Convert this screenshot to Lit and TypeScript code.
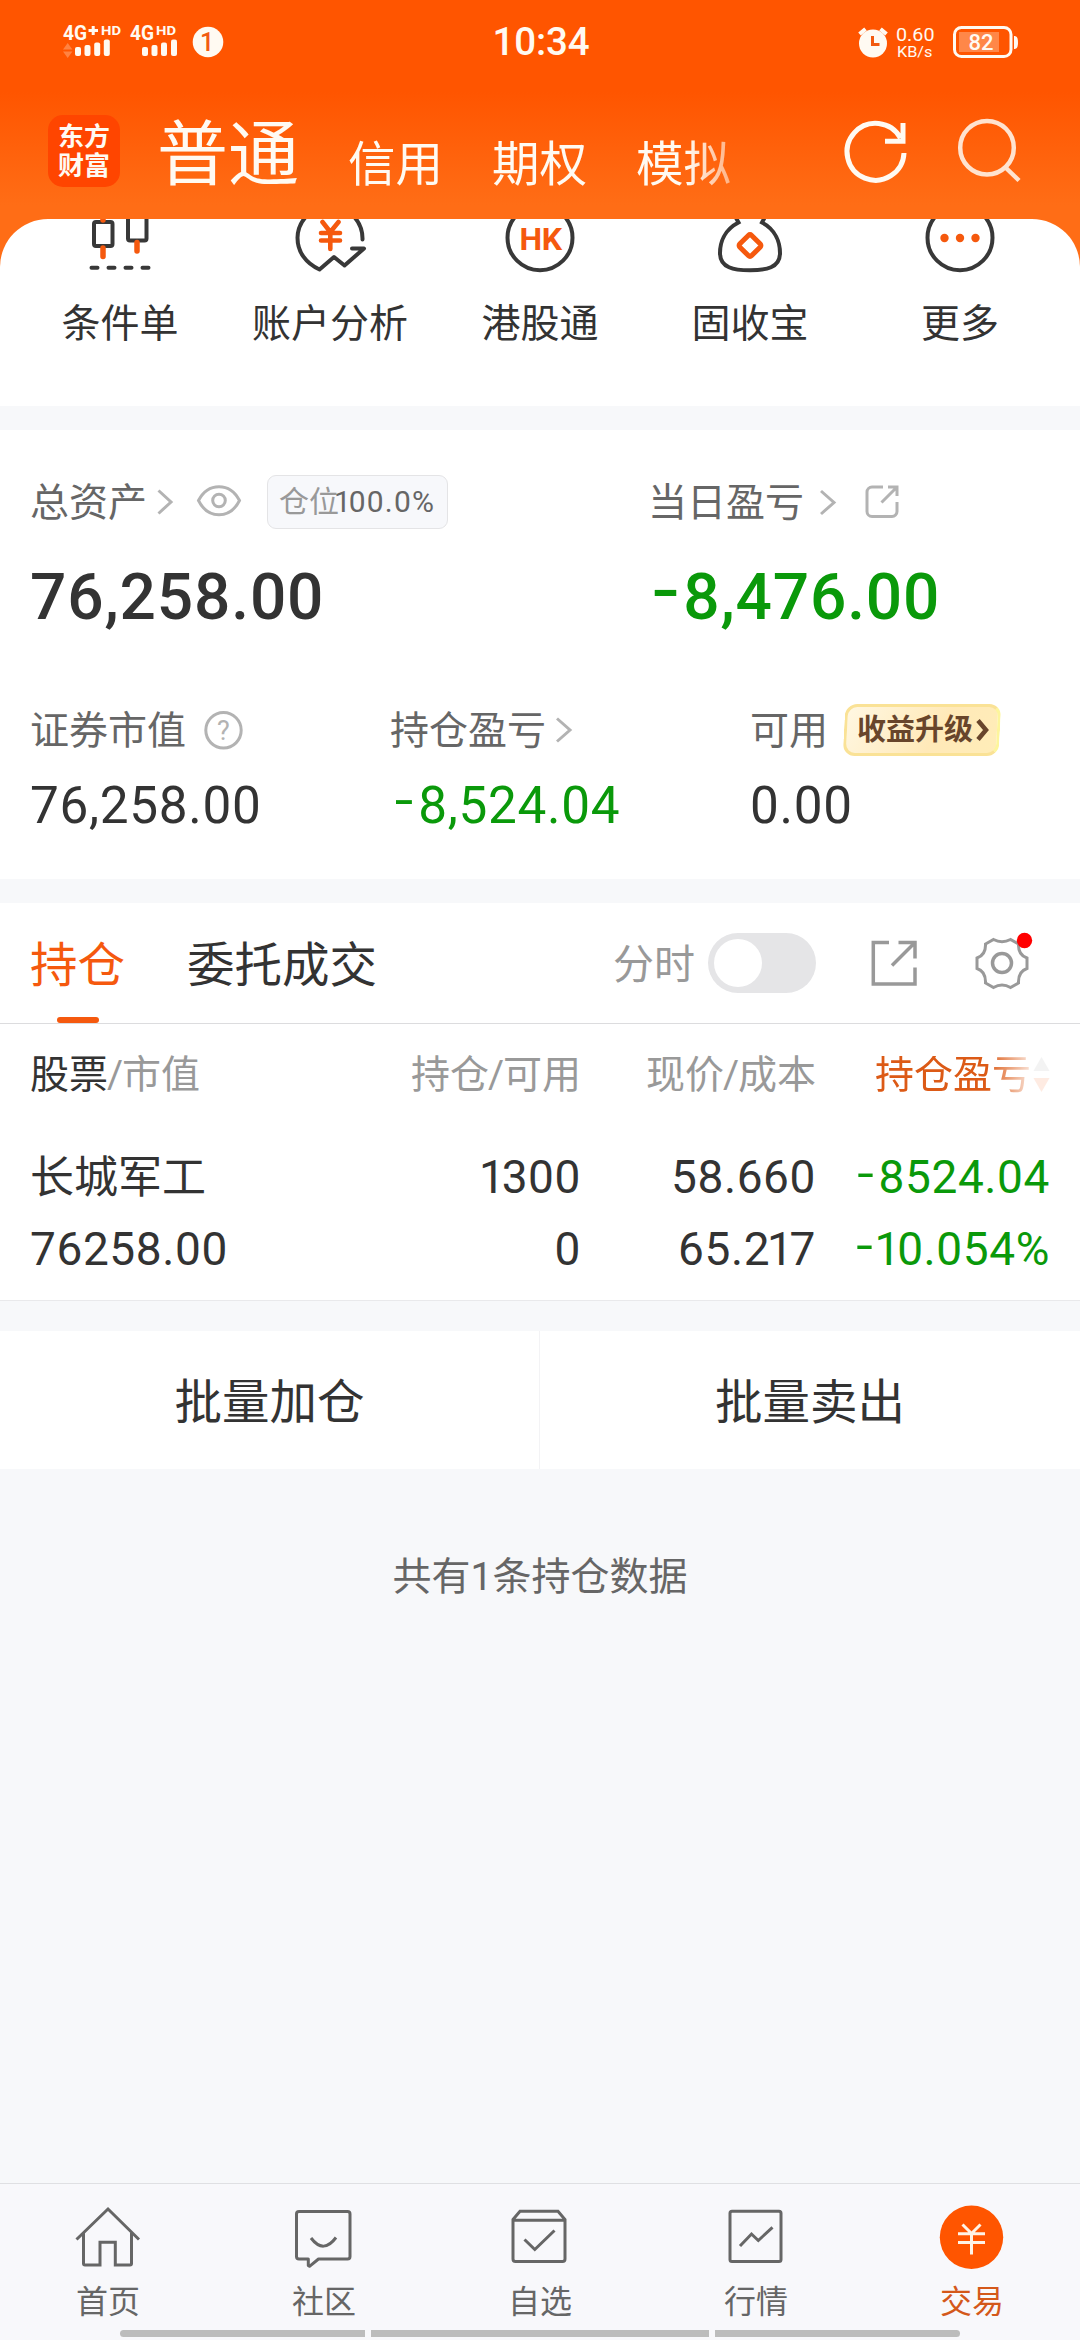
import { LitElement, html, css, svg } from "lit";
import { customElement } from "lit/decorators.js";

const digits = (value: string) =>
  [...value].map((ch) => (ch === "1" ? html`<span class="one">1</span>` : ch));

const num = (value: string) =>
  value.startsWith("-")
    ? html`<span class="num"><span class="minus">-</span>${digits(value.slice(1))}</span>`
    : html`<span class="num">${digits(value)}</span>`;

const shortcuts = [
  {
    label: "条件单",
    cx: 120,
    art: svg`<g class="dark"><rect x="94" y="222" width="18.5" height="24" rx="2"/><rect x="128" y="200" width="18.5" height="40.5" rx="2"/>
      <path d="M91.5 267.7h6M108.5 267.7h6M125.5 267.7h6M142.5 267.7h6" stroke-linecap="round"/></g>
      <path class="hot" stroke-width="5.5" d="M103 216V220M103 248V256.500M137 242.500V251" stroke-linecap="round"/>`,
  },
  {
    label: "账户分析",
    cx: 330,
    art: svg`<path class="dark" stroke-linecap="round" stroke-linejoin="round" d="M362.500 239.500A32.500 32.500 0 1 0 297.500 237.700C297.500 252 306 263.500 319.500 269.500L334 257L344.500 265.500L364 248.500H352"/>
      <path class="hot" stroke-width="4.600" stroke-linecap="round" d="M322.500 222L330.300 232L338.500 222M330.300 232V249M321 233H340M321 240.500H340"/>`,
  },
  {
    label: "港股通",
    cx: 540,
    art: svg`<circle class="dark" cx="540" cy="237.700" r="32.500"/>
      <text class="hk" x="540.500" y="249.500" text-anchor="middle">HK</text>`,
  },
  {
    label: "固收宝",
    cx: 750,
    art: svg`<path class="dark" d="M735 216L738.500 222.500C724 230 720 243 720 253C720 268 734 270.300 750 270.300C766 270.300 780 268 780 253C780 243 776 230 762 222.500L765.500 216"/>
      <rect class="hot" stroke-width="5" x="-8.300" y="-8.300" width="16.600" height="16.600" rx="2" transform="translate(750 245.500) rotate(45)"/>`,
  },
  {
    label: "更多",
    cx: 960,
    art: svg`<circle class="dark" cx="960" cy="237.700" r="32.500"/>
      <g fill="#f5590e"><circle cx="944.500" cy="238" r="4.200"/><circle cx="960" cy="238" r="4.200"/><circle cx="975.500" cy="238" r="4.200"/></g>`,
  },
];

const tabs = [
  {
    label: "首页",
    cx: 108,
    art: svg`<path d="M76.500 2239.500L108 2209L139 2239.500M83.500 2233V2263.500a1.500 1.500 0 0 0 1.500 1.500H100V2242.200H115.300V2265H130a1.500 1.500 0 0 0 1.500 -1.500V2233"/>`,
  },
  {
    label: "社区",
    cx: 324,
    art: svg`<path stroke-linejoin="round" d="M299 2211.500H347.500a2.500 2.500 0 0 1 2.500 2.500V2256.500a2.500 2.500 0 0 1 -2.500 2.500H318.500L309.500 2266.300L308.300 2265.500V2259H299a2.500 2.500 0 0 1 -2.500 -2.500V2214a2.500 2.500 0 0 1 2.500 -2.500Z"/><path d="M311 2238Q323.500 2254.500 336 2237.500"/>`,
  },
  {
    label: "自选",
    cx: 540,
    art: svg`<path d="M513 2219.500L520 2211.300H558L565 2219.500V2259a2.500 2.500 0 0 1 -2.500 2.500H515.500a2.500 2.500 0 0 1 -2.500 -2.500ZM513 2220.300H565M524.500 2239.500L534.800 2249.500L554.500 2230.500"/>`,
  },
  {
    label: "行情",
    cx: 756,
    art: svg`<rect x="730" y="2211.300" width="51" height="50.200" rx="2"/><path d="M740 2246L751.500 2234L758.300 2240.500L772.500 2227.300"/>`,
  },
  {
    label: "交易",
    cx: 972,
    active: true,
    art: svg`<circle cx="971.500" cy="2237.300" r="31.700" fill="#ff5500" stroke="none"/><path stroke="#fff3e6" d="M962.500 2224.500L971.500 2233.500L980.500 2224.500M971.500 2233.500V2254.500M958 2233.700H985M958 2242.500H985"/>`,
  },
];

@customElement("app-root")
export class AppRoot extends LitElement {
  static styles = css`
    :host {
      display: block;
      font-family: Roboto, "Noto Sans CJK SC", sans-serif;
      color: #333;
      line-height: 1;
    }
    * { box-sizing: border-box; }
    svg { display: block; flex: none; overflow: visible; fill: none; }
    .screen {
      width: 1080px;
      height: 2340px;
      display: flex;
      flex-direction: column;
      background: #f7f8fa;
      overflow: hidden;
      white-space: nowrap;
    }
    .header {
      height: 219px;
      flex: none;
      background: linear-gradient(#ff5500 0, #ff5500 92px, #ff6d16 205px, #ff6d16 100%);
      color: #fffaf2;
    }
    .status {
      height: 84px;
      display: grid;
      grid-template-columns: 1fr auto 1fr;
      padding: 0 61px 0 63px;
      align-items: center;
    }
    .status svg text { font-family: Roboto, sans-serif; fill: #fffaf2; }
    .status .tray { justify-self: end; }
    .clock { font-size: 38.5px; font-weight: 500; letter-spacing: -0.1px; }
    .nav { display: flex; padding-left: 48px; }
    .logo {
      width: 72px;
      height: 72px;
      margin-top: 31px;
      border-radius: 15px;
      background: #ff4500;
      display: flex;
      flex-direction: column;
      align-items: center;
      padding-top: 8px;
      font-size: 26px;
      line-height: 29px;
      font-weight: 700;
    }
    .modes {
      display: flex;
      align-items: baseline;
      height: 110px;
      width: 660px;
      margin: 35px 0 0 37px;
      font-size: 47.5px;
      -webkit-mask-image: linear-gradient(90deg, #000 530px, transparent 620px);
      mask-image: linear-gradient(90deg, #000 530px, transparent 620px);
    }
    .modes .on { font-size: 71px; margin-right: 49px; }
    .modes .mode { margin-right: 49px; padding-top: 2px; transform: translateY(2px); }
    .tools { margin: 31px 0 0 23px; }
    .backdrop { background: #ff6d16; flex: none; }
    .shortcuts {
      height: 187px;
      border-radius: 48px 48px 0 0;
      background: #fff;
      overflow: hidden;
      display: flex;
      padding: 0 15px;
    }
    .shortcut {
      width: 210px;
      display: flex;
      flex-direction: column;
      align-items: center;
      font-size: 39px;
      gap: 31px;
    }
    .dark { stroke: #383838; stroke-width: 4; }
    .hot { stroke: #f5590e; }
    .hk { font: 700 32px Roboto, sans-serif; fill: #f5590e; letter-spacing: -0.5px; }
    .assets {
      flex: none;
      height: 449px;
      margin-top: 24px;
      padding: 45px 30px 0;
      background: #fff;
    }
    .duo { display: grid; grid-template-columns: 618px 1fr; align-items: center; }
    .trio { display: grid; grid-template-columns: 360px 360px 1fr; align-items: center; }
    .cell { display: flex; align-items: center; }
    .label { font-size: 39px; color: #666; padding-top: 2px; }
    .chev { stroke: #b3b3b3; stroke-width: 3; }
    .r1 { height: 54px; }
    .r2 { margin-top: 37px; font-size: 64px; font-weight: 500; }
    .r3 { margin-top: 74px; height: 52px; }
    .r4 { margin-top: 24px; font-size: 51.3px; }
    .num { letter-spacing: 0.013em; }
    .one { margin-left: -0.07em; letter-spacing: -0.07em; }
    .minus {
      display: inline-block;
      width: 0.55em;
      text-align: center;
      letter-spacing: 0;
      transform: translateY(-0.09em) scaleX(1.3);
    }
    .down { color: #0a990a; }
    .soft { stroke: #b3b3b3; stroke-width: 3; }
    .ratio {
      margin-left: 25px;
      width: 181px;
      height: 54px;
      border: 1px solid #e4e4e6;
      border-radius: 9px;
      background: #f7f8fb;
      font-size: 30px;
      color: #999;
      display: flex;
      align-items: center;
      padding-left: 11px;
    }
    .ratio .num { color: #666; margin-left: -3px; letter-spacing: 0.04em; }
    .upgrade {
      position: relative;
      z-index: 0;
      margin-left: 15px;
      width: 158px;
      height: 52px;
      padding-left: 14px;
      display: flex;
      align-items: center;
      gap: 3px;
      font-size: 29px;
      font-weight: 700;
      color: #68452b;
    }
    .upgrade::before {
      content: "";
      position: absolute;
      inset: 0 1px;
      z-index: -1;
      border-radius: 12px;
      border: 3px solid #fae296;
      border-right-color: #fdf59c;
      background: linear-gradient(120deg, #fff7e2, #ffe9b8 60%, #ffedb8);
      transform: skewX(-3deg);
    }
    .upgrade svg { stroke: #68452b; stroke-width: 4.5; }
    .holdings { flex: none; margin-top: 24px; height: 398px; background: #fff; border-bottom: 1px solid #e9e9eb; }
    .bar {
      height: 121px;
      border-bottom: 1px solid #dcdcde;
      display: flex;
      align-items: center;
      padding: 0 45px 0 30px;
      font-size: 47.5px;
    }
    .tab { position: relative; padding-top: 8px; margin-right: 62px; }
    .tab.on { color: #f5590e; }
    .tab.on::after {
      content: "";
      position: absolute;
      left: 27px;
      top: 82px;
      width: 42px;
      height: 6px;
      border-radius: 3px;
      background: #f5590e;
    }
    .minute { margin-left: auto; font-size: 41px; color: #999; padding-top: 5px; }
    .switch { width: 108px; height: 60px; margin-left: 13px; border-radius: 30px; background: #e5e5e7; padding: 6px; }
    .knob { width: 48px; height: 48px; border-radius: 50%; background: #fff; }
    .tool { stroke: #999; stroke-width: 3.5; }
    .grid { display: grid; grid-template-columns: 300px 251px 235px 1fr; padding: 0 30px; align-items: center; }
    .grid > * { text-align: right; }
    .grid > :first-child { text-align: left; }
    .heads { height: 98px; padding-top: 4px; font-size: 39px; color: #999; }
    .heads .strong { color: #333; }
    .slash { margin: 0 -1px; }
    .sorted {
      justify-self: end;
      display: flex;
      align-items: center;
      gap: 2px;
      color: #dc5a16;
      -webkit-mask-image: linear-gradient(90deg, #000 112px, rgba(0, 0, 0, 0.12) 158px);
      mask-image: linear-gradient(90deg, #000 112px, rgba(0, 0, 0, 0.12) 158px);
    }
    .rows { line-height: 72px; font-size: 46px; }
    .heads + .rows { margin-top: 19px; }
    .rows .name { font-size: 44px; padding-top: 1px; height: 72px; }
    .batch {
      flex: none;
      margin-top: 30px;
      height: 138px;
      display: grid;
      grid-template-columns: 1fr 1fr;
      background: #fff;
      font-size: 47.5px;
    }
    .batch > div { display: flex; align-items: center; justify-content: center; padding-top: 8px; }
    .batch > div:first-child { border-right: 1px solid #f3f3f5; }
    .note { margin-top: 89px; text-align: center; font-size: 39px; color: #666; }
    .dock { margin-top: auto; height: 157px; flex: none; border-top: 1px solid #dfe0e3; background: #f8f8fb; }
    .docks { display: flex; }
    .dockitem { width: 216px; display: flex; flex-direction: column; align-items: center; font-size: 32px; color: #666; }
    .dockitem svg { stroke: #666; stroke-width: 3; }
    .dockitem.on { color: #d4581a; }
    .home { display: flex; justify-content: center; gap: 6px; margin-top: 12px; }
    .home div { height: 7px; width: 245px; background: #bcbcbc; }
    .home .mid { width: 338px; }
    .home .first { border-radius: 4px 0 0 4px; }
    .home .last { border-radius: 0 4px 4px 0; }
  `;

  private statusBar() {
    return html`<div class="status">
      <svg width="164" height="42" viewBox="63 21 164 42">
        <g font-weight="700">
          <text x="63" y="40" font-size="20" textLength="24" lengthAdjust="spacingAndGlyphs">4G</text>
          <text x="101" y="35" font-size="13.500" textLength="20" lengthAdjust="spacingAndGlyphs">HD</text>
          <text x="130" y="40" font-size="20" textLength="24" lengthAdjust="spacingAndGlyphs">4G</text>
          <text x="156" y="35" font-size="13.500" textLength="20" lengthAdjust="spacingAndGlyphs">HD</text>
        </g>
        <path stroke="#fffaf2" stroke-width="3" d="M88.500 30.500h9.500M93.200 26v9"/>
        <path fill="#ff8342" d="M63 49.500l4.700-6.500l4.700 6.500zM63 51.500l4.700 6.500l4.700-6.500z"/>
        <g fill="#fffaf2">
          <rect x="75" y="47" width="6" height="9" rx="2"/><rect x="84.500" y="45" width="6" height="11" rx="2"/><rect x="94.200" y="42.500" width="6" height="13.500" rx="2"/><rect x="103.800" y="39.500" width="6" height="16.500" rx="2"/>
          <rect x="142" y="47" width="6" height="9" rx="2"/><rect x="151.500" y="45" width="6" height="11" rx="2"/><rect x="161" y="42.500" width="6" height="13.500" rx="2"/><rect x="171" y="39.500" width="6" height="16.500" rx="2"/>
          <circle cx="208" cy="42" r="15.300"/>
        </g>
        <text x="207" y="51" font-size="25" font-weight="500" text-anchor="middle" style="fill:#f25a10">1</text>
      </svg>
      <div class="clock">10:34</div>
      <svg class="tray" width="162" height="42" viewBox="857 21 162 42">
        <circle cx="873" cy="43.500" r="14" fill="#fffaf2"/>
        <path stroke="#fffaf2" stroke-width="4" d="M859.500 34l6-5M886.500 34l-6-5"/>
        <path stroke="#f25a10" stroke-width="3" d="M872.500 36v8.500h7"/>
        <text x="896" y="41" font-size="18.500" textLength="38.500" lengthAdjust="spacingAndGlyphs">0.60</text>
        <text x="897" y="57" font-size="15.500" textLength="35.500" lengthAdjust="spacingAndGlyphs">KB/s</text>
        <rect x="954.500" y="27.500" width="56.500" height="29" rx="7" stroke="#fffaf2" stroke-width="3"/>
        <rect x="959" y="32" width="40" height="20" fill="#ff8748"/>
        <path fill="#fffaf2" d="M1014 36c3 0 4 2 4 6.500s-1 6.500-4 6.500z"/>
        <text x="981" y="50" font-size="22" font-weight="500" text-anchor="middle">82</text>
      </svg>
    </div>`;
  }

  render() {
    return html`<div class="screen">
      <div class="header">
        ${this.statusBar()}
        <div class="nav">
          <div class="logo"><div>东方</div><div>财富</div></div>
          <div class="modes">
            <div class="on">普通</div>
            <div class="mode">信用</div><div class="mode">期权</div><div class="mode">模拟</div>
          </div>
          <svg class="tools" width="195" height="72" viewBox="840 115 195 72">
            <path stroke="#fffaf2" stroke-width="5" d="M904 153A28.500 28.500 0 1 1 900.500 138M903 123V141.300H885"/>
            <g stroke="#ffe3cf" stroke-width="4.500"><circle cx="987" cy="147.700" r="26.800"/><path d="M1005.500 167.500L1019 180.500"/></g>
          </svg>
        </div>
      </div>

      <div class="backdrop"><div class="shortcuts">
        ${shortcuts.map(
          (s) => html`<div class="shortcut">
            <svg width="80" height="55" viewBox="${s.cx - 40} 219 80 55">${s.art}</svg>
            <div>${s.label}</div>
          </div>`
        )}
      </div></div>

      <div class="assets">
        <div class="duo r1">
          <div class="cell">
            <div class="label">总资产</div>
            <svg class="chev" width="16" height="26" viewBox="-10 0 16 26"><path d="M1.500 1.500 L14 13 L1.500 24.500"/></svg>
            <svg width="79" height="54" viewBox="163 475 79 54"><g class="soft"><path d="M198.500 500.500C208 482 230 482 239.500 500.500C230 519.500 208 519.500 198.500 500.500Z"/><circle cx="219" cy="500.500" r="6.300"/></g></svg>
            <div class="ratio">仓位${num("100.0%")}</div>
          </div>
          <div class="cell">
            <div class="label">当日盈亏</div>
            <svg width="100" height="54" viewBox="804 475 100 54"><g class="soft"><path d="M821 491L834 502.500L821 514"/><path d="M883 487H872a5 5 0 0 0 -5 5V511.500a5 5 0 0 0 5 5H892a5 5 0 0 0 5 -5V502M888 487H897V496M897 487L881.500 502.500"/></g></svg>
          </div>
        </div>
        <div class="duo r2">
          <div>${num("76,258.00")}</div>
          <div class="down">${num("-8,476.00")}</div>
        </div>
        <div class="trio r3">
          <div class="cell">
            <div class="label">证券市值</div>
            <svg width="60" height="52" viewBox="186 704 60 52"><circle class="soft" cx="223.500" cy="730.300" r="17.700"/><text x="223.500" y="740" text-anchor="middle" font-size="27" fill="#b3b3b3">?</text></svg>
          </div>
          <div class="cell">
            <div class="label">持仓盈亏</div>
            <svg width="30" height="26" viewBox="-10 0 30 26"><path class="soft" d="M1 1.500 L14 13 L1 24.500"/></svg>
          </div>
          <div class="cell">
            <div class="label">可用</div>
            <div class="upgrade">收益升级<svg width="13" height="22" viewBox="0 0 13 22"><path d="M2 1.500L10 11L2 20.500"/></svg></div>
          </div>
        </div>
        <div class="trio r4">
          <div>${num("76,258.00")}</div>
          <div class="down">${num("-8,524.04")}</div>
          <div>${num("0.00")}</div>
        </div>
      </div>

      <div class="holdings">
        <div class="bar">
          <div class="tab on">持仓</div>
          <div class="tab">委托成交</div>
          <div class="minute">分时</div>
          <div class="switch"><div class="knob"></div></div>
          <svg width="219" height="60" viewBox="816 933 219 60">
            <g class="tool"><path d="M889 942.500H873.300V984H915V967.500M898.500 942.500H915V958.500M915 942.500L892 965.500"/>
            <path stroke-width="3" d="M993.500 939.500Q1002 944 1010.500 939.500L1018.500 944Q1018 955 1027 958V968.500Q1018 971.500 1018.500 983L1010.500 987.500Q1002 982.500 993.500 987.500L985.500 983Q986 971.500 977 968.500V958Q986 955 985.500 944Z"/>
            <circle cx="1002" cy="963" r="9.500"/></g>
            <circle cx="1024.500" cy="940.500" r="7.700" fill="#f00"/>
          </svg>
        </div>
        <div class="grid heads">
          <div><span class="strong">股票</span><span class="slash">/</span>市值</div>
          <div>持仓<span class="slash">/</span>可用</div>
          <div>现价<span class="slash">/</span>成本</div>
          <div class="sorted">持仓盈亏<svg width="17" height="36" viewBox="0 0 17 36"><path fill="#999" d="M8.500 0L16.500 14H.500z"/><path fill="#f5590e" d="M8.500 35L16.500 21H.500z"/></svg></div>
        </div>
        <div class="grid rows">
          <div class="name">长城军工</div><div>${num("1300")}</div><div>${num("58.660")}</div><div class="down">${num("-8524.04")}</div>
        </div>
        <div class="grid rows">
          <div>${num("76258.00")}</div><div>${num("0")}</div><div>${num("65.217")}</div><div class="down">${num("-10.054%")}</div>
        </div>
      </div>

      <div class="batch"><div>批量加仓</div><div>批量卖出</div></div>
      <div class="note">共有1条持仓数据</div>

      <div class="dock">
        <div class="docks">
          ${tabs.map(
            (t) => html`<div class="dockitem ${t.active ? "on" : ""}">
              <svg width="70" height="102" viewBox="${t.cx - 35} 2184 70 102">${t.art}</svg>
              <div>${t.label}</div>
            </div>`
          )}
        </div>
        <div class="home"><div class="first"></div><div class="mid"></div><div class="last"></div></div>
      </div>
    </div>`;
  }
}
